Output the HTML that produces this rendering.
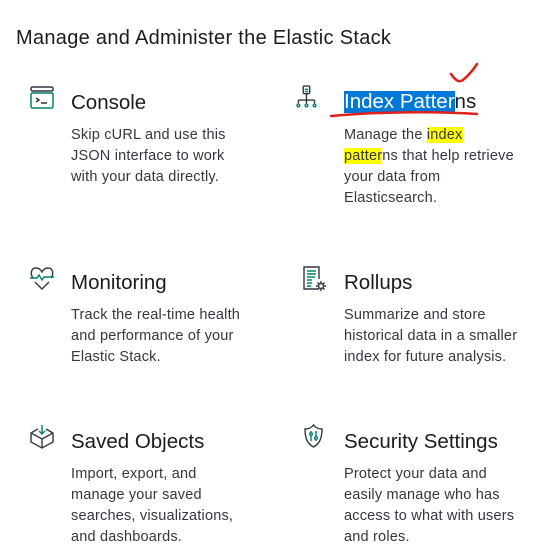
<!DOCTYPE html>
<html><head><style>
body{margin:0;width:540px;height:535px;overflow:hidden;background:#fff;font-family:"Liberation Sans",sans-serif;position:relative}
.h{position:absolute;left:16px;top:27px;font-size:20px;letter-spacing:0.3px;color:#1a1c21;white-space:nowrap}
.t{position:absolute;font-size:20.5px;color:#1a1c21;white-space:nowrap}
.d{position:absolute;font-size:14.5px;line-height:21px;color:#343741;white-space:nowrap;letter-spacing:0.2px}
svg{position:absolute}
.y{background:#ffff00}
</style></head><body>
<div class="h">Manage and Administer the Elastic Stack</div>

<svg style="left:29px;top:85px" width="26" height="26" viewBox="0 0 26 26" fill="none" stroke-width="1.5"><rect x="2" y="2" width="22" height="4" rx="1.5" stroke="#343741"/><rect x="2" y="8" width="22" height="15" rx="1.5" stroke="#00806e"/><path d="M7 13l3 2-3 2M12 18h6" stroke="#343741"/></svg>
<div class="t" style="left:71px;top:91px">Console</div>
<div class="d" style="left:71px;top:125px">Skip cURL and use this<br>JSON interface to work<br>with your data directly.</div>

<svg style="left:294px;top:85px" width="26" height="28" viewBox="0 0 24 26" fill="none" stroke-width="1.3"><rect x="8.5" y="1" width="6" height="7" rx="1" stroke="#343741"/><path d="M10 4h3M10 6h3" stroke="#00806e"/><path d="M11.5 8v6M4 14h15M4 14v3M11.5 14v3M19 14v3" stroke="#343741"/><circle cx="4" cy="19" r="1.3" stroke="#00806e"/><circle cx="11.5" cy="19" r="1.3" stroke="#00806e"/><circle cx="19" cy="19" r="1.3" stroke="#00806e"/></svg>
<div class="t" style="left:344px;top:90px"><span style="color:#fff;background:#0078d7;display:inline-block;line-height:22px;height:22px">Index Patter</span>ns</div>
<svg style="left:325px;top:60px" width="170" height="60" viewBox="0 0 170 60" fill="none" stroke="#e0201c" stroke-width="2.5" stroke-linecap="round"><path d="M6 56C50 52 110 51 152 54"/><path d="M126 14c4 6 8 9 12 6 5-4 10-10 14-16"/></svg>
<div class="d" style="left:344px;top:125px">Manage the <span class="y">index </span><br><span class="y">patter</span>ns that help retrieve<br>your data from<br>Elasticsearch.</div>

<svg style="left:29px;top:265px" width="26" height="26" viewBox="0 0 26 26" fill="none" stroke-width="1.4"><path d="M4 13C1 9 2 3 7 3c3 0 5 2 6 4 1-2 3-4 6-4 5 0 6 6 3 10" stroke="#343741"/><path d="M1 13h7l2-3 3 5 2-3h10" stroke="#00806e"/><path d="M6 17l7 7 7-7" stroke="#343741"/></svg>
<div class="t" style="left:71px;top:271px">Monitoring</div>
<div class="d" style="left:71px;top:305px">Track the real-time health<br>and performance of your<br>Elastic Stack.</div>

<svg style="left:302px;top:265px" width="26" height="26" viewBox="0 0 26 26" fill="none" stroke-width="1.4"><path d="M17 14V2H2v22h15" stroke="#343741"/><path d="M5 6h9M5 9h9M5 12h8M5 15h5M5 18h5M5 21h4" stroke="#00806e"/><circle cx="19" cy="21" r="2.5" stroke="#343741"/><path d="M19 16v2M19 24v2M14 21h2M22 21h2M15.5 17.5l1.5 1.5M21 23l1.5 1.5M15.5 24.5L17 23M21 19l1.5-1.5" stroke="#343741"/></svg>
<div class="t" style="left:344px;top:271px">Rollups</div>
<div class="d" style="left:344px;top:305px">Summarize and store<br>historical data in a smaller<br>index for future analysis.</div>

<svg style="left:29px;top:424px" width="26" height="26" viewBox="0 0 26 26" fill="none" stroke-width="1.4"><path d="M9 5L2 9v9l11 6 11-6V9l-7-4" stroke="#343741"/><path d="M2 9l11 6 11-6M13 15v9" stroke="#343741"/><path d="M13 1v9M10 7l3 3 3-3" stroke="#00806e"/></svg>
<div class="t" style="left:71px;top:430px">Saved Objects</div>
<div class="d" style="left:71px;top:464px">Import, export, and<br>manage your saved<br>searches, visualizations,<br>and dashboards.</div>

<svg style="left:302px;top:424px" width="24" height="26" viewBox="0 0 24 26" fill="none" stroke-width="1.4"><path d="M3 5C7 5 10 3 11.5 1 13 3 16 5 20 5c0 10-3 15-8.5 18C6 20 3 15 3 5z" stroke="#343741"/><path d="M9 7v10M14 7v10" stroke="#00806e"/><circle cx="9" cy="10" r="1.3" fill="#fff" stroke="#00806e"/><circle cx="14" cy="14" r="1.3" fill="#fff" stroke="#00806e"/></svg>
<div class="t" style="left:344px;top:430px">Security Settings</div>
<div class="d" style="left:344px;top:464px">Protect your data and<br>easily manage who has<br>access to what with users<br>and roles.</div>
</body></html>
